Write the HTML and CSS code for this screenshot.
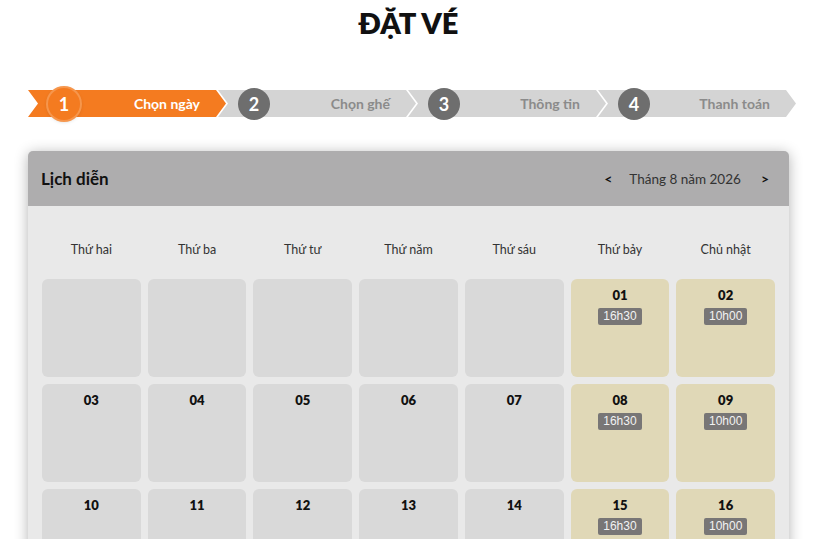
FILE: index.html
```html
<!DOCTYPE html>
<html lang="vi">
  <head>
    <meta charset="UTF-8" />
    <meta name="viewport" content="width=device-width, initial-scale=1.0" />
    <title>Đặt vé</title>
    <link rel="stylesheet" href="styles.css">
  </head>
  <body>
    <div class="page">
      <h1 class="title">ĐẶT VÉ</h1>

      <ol class="steps">
        <li class="step active"><span class="step-num">1</span><span class="step-label">Chọn ngày</span></li>
        <li class="step"><span class="step-num">2</span><span class="step-label">Chọn ghế</span></li>
        <li class="step"><span class="step-num">3</span><span class="step-label">Thông tin</span></li>
        <li class="step"><span class="step-num">4</span><span class="step-label">Thanh toán</span></li>
      </ol>

      <div class="calendar">
        <div class="calendar-head">
          <h2>Lịch diễn</h2>
          <div class="month-nav">
            <button class="nav-btn">&lt;</button>
            <span class="month-label">Tháng 8 năm 2026</span>
            <button class="nav-btn">&gt;</button>
          </div>
        </div>

        <div class="calendar-body">
          <div class="weekdays">
            <span>Thứ hai</span>
            <span>Thứ ba</span>
            <span>Thứ tư</span>
            <span>Thứ năm</span>
            <span>Thứ sáu</span>
            <span>Thứ bảy</span>
            <span>Chủ nhật</span>
          </div>

          <div class="days">
            <div class="day"></div>
            <div class="day"></div>
            <div class="day"></div>
            <div class="day"></div>
            <div class="day"></div>
            <div class="day show"><span class="num">01</span><span class="time">16h30</span></div>
            <div class="day show"><span class="num">02</span><span class="time">10h00</span></div>

            <div class="day"><span class="num">03</span></div>
            <div class="day"><span class="num">04</span></div>
            <div class="day"><span class="num">05</span></div>
            <div class="day"><span class="num">06</span></div>
            <div class="day"><span class="num">07</span></div>
            <div class="day show"><span class="num">08</span><span class="time">16h30</span></div>
            <div class="day show"><span class="num">09</span><span class="time">10h00</span></div>

            <div class="day"><span class="num">10</span></div>
            <div class="day"><span class="num">11</span></div>
            <div class="day"><span class="num">12</span></div>
            <div class="day"><span class="num">13</span></div>
            <div class="day"><span class="num">14</span></div>
            <div class="day show"><span class="num">15</span><span class="time">16h30</span></div>
            <div class="day show"><span class="num">16</span><span class="time">10h00</span></div>

            <div class="day"><span class="num">17</span></div>
            <div class="day"><span class="num">18</span></div>
            <div class="day"><span class="num">19</span></div>
            <div class="day"><span class="num">20</span></div>
            <div class="day"><span class="num">21</span></div>
            <div class="day show"><span class="num">22</span><span class="time">16h30</span></div>
            <div class="day show"><span class="num">23</span><span class="time">10h00</span></div>

            <div class="day"><span class="num">24</span></div>
            <div class="day"><span class="num">25</span></div>
            <div class="day"><span class="num">26</span></div>
            <div class="day"><span class="num">27</span></div>
            <div class="day"><span class="num">28</span></div>
            <div class="day show"><span class="num">29</span><span class="time">16h30</span></div>
            <div class="day show"><span class="num">30</span><span class="time">10h00</span></div>

            <div class="day"><span class="num">31</span></div>
          </div>
        </div>
      </div>
    </div>
  </body>
</html>
```

FILE: styles.css
```css
* {
  margin: 0;
  padding: 0;
  box-sizing: border-box;
}

body {
  font-family: Lato, "Liberation Sans", sans-serif;
  background-color: #fff;
  color: #111;
}

.page {
  width: 761px;
  margin: 0 31px 40px 28px;
}

.title {
  text-align: center;
  font-size: 29px;
  font-weight: 800;
  line-height: 40px;
  padding-top: 3px;
}

/* progress bar */
.steps {
  list-style: none;
  display: flex;
  width: 768px;
  margin-top: 47px;
}

.step {
  position: relative;
  flex: 0 0 198px;
  height: 27px;
  display: flex;
  align-items: center;
  margin-left: -8px;
}

.step:first-child {
  margin-left: 0;
}

.step::before {
  content: "";
  position: absolute;
  inset: 0;
  background-color: #d4d4d4;
  clip-path: polygon(0 0, calc(100% - 10px) 0, 100% 50%, calc(100% - 10px) 100%, 0 100%, 10px 50%);
}

.step.active::before {
  background-color: #f47b20;
}

.step-num {
  position: relative;
  width: 32px;
  height: 32px;
  margin-left: 20px;
  border-radius: 50%;
  background-color: #6e6e6e;
  color: #fff;
  font-size: 18px;
  font-weight: 700;
  display: flex;
  align-items: center;
  justify-content: center;
}

.step.active .step-num {
  background-color: #f47b20;
  box-shadow: 0 0 0 2px #f6964c, 0 1px 4px rgba(0, 0, 0, 0.25);
}

.step-label {
  position: relative;
  margin-left: auto;
  padding-right: 26px;
  font-size: 14px;
  font-weight: 700;
  color: #8b8b8b;
}

.step.active .step-label {
  color: #fff;
}

/* calendar card */
.calendar {
  margin-top: 34px;
  border-radius: 5px;
  overflow: hidden;
  background-color: #e9e9e9;
  box-shadow: 0 2px 14px rgba(0, 0, 0, 0.3);
}

.calendar-head {
  height: 55px;
  background-color: #aeadae;
  display: flex;
  align-items: center;
  justify-content: space-between;
  padding: 0 20px 0 13px;
}

.calendar-head h2 {
  font-size: 17px;
  font-weight: 700;
  color: #111;
}

.month-nav {
  display: flex;
  align-items: center;
}

.nav-btn {
  background: none;
  border: none;
  font-family: inherit;
  font-size: 14px;
  font-weight: 700;
  color: #111;
  cursor: pointer;
}

.month-label {
  font-size: 13.5px;
  color: #333;
  margin: 0 20px 0 17px;
}

.calendar-body {
  padding: 34px 14px 20px 14px;
}

.weekdays {
  display: grid;
  grid-template-columns: repeat(7, 1fr);
  gap: 7px;
  text-align: center;
  font-size: 12.5px;
  color: #333;
  line-height: 20px;
  margin-bottom: 19px;
}

.days {
  display: grid;
  grid-template-columns: repeat(7, 1fr);
  grid-auto-rows: 98px;
  gap: 7px;
}

.day {
  background-color: #d9d9d9;
  border-radius: 6px;
  display: flex;
  flex-direction: column;
  align-items: center;
  padding-top: 8px;
}

.day.show {
  background-color: #e0d8b7;
}

.num {
  font-size: 13px;
  font-weight: 800;
  line-height: 16px;
  color: #111;
}

.time {
  margin-top: 5px;
  font-family: "Liberation Sans", Arial, sans-serif;
  font-size: 12px;
  line-height: 17px;
  padding: 0 5px;
  border-radius: 2px;
  background-color: #787676;
  color: #f2f2f2;
}
```
